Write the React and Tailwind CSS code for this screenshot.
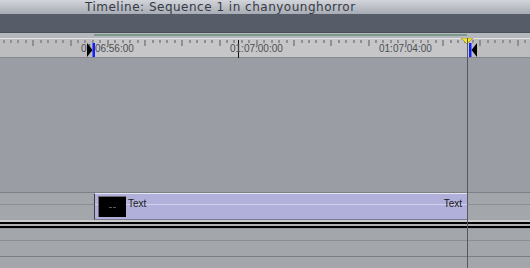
import React from "react";

const ticks = Array.from({ length: 72 }, (_, i) => 2.5 + i * 7.45);

const labels = [
  { text: "01:06:56:00", x: 81 },
  { text: "01:07:00:00", x: 230 },
  { text: "01:07:04:00", x: 379 },
];

const sans = { fontFamily: '"Liberation Sans", Arial, sans-serif' };

function Ruler() {
  return (
    <div className="relative h-[20px] bg-[#c6c6c8] border-t border-[#e2e2e4] border-b border-b-[#86898e]">
      <div className="absolute left-0 top-0 bottom-0 w-[94px] bg-[#bdbdbf]" />
      <div className="absolute left-[472px] right-0 top-0 bottom-0 bg-[#bdbdbf]" />
      {ticks.map((x, i) => (
        <div
          key={i}
          className="absolute top-[1px] w-[2px] bg-[#8f8f92]"
          style={{ left: x, height: i % 5 === 4 ? 6 : 3 }}
        />
      ))}
      <div className="absolute left-[238px] top-[1px] h-[18px] w-[1px] bg-[#111]" />
      {labels.map((l) => (
        <span
          key={l.text}
          className="absolute top-[4px] text-[10px] leading-[12px] text-[#4c4e52]"
          style={{ left: l.x, ...sans }}
        >
          {l.text}
        </span>
      ))}
      {/* in point */}
      <svg className="absolute left-[86px] top-[4px]" width="9" height="14" viewBox="0 0 9 14">
        <path d="M1 0 L6.5 7 L1 14 Z" fill="#000" />
        <rect x="6.5" y="0" width="2.5" height="14" fill="#1020ff" />
      </svg>
      {/* out point */}
      <svg className="absolute left-[469px] top-[4px]" width="9" height="14" viewBox="0 0 9 14">
        <rect x="0" y="0" width="2.5" height="14" fill="#1020ff" />
        <path d="M8 0 L2.5 7 L8 14 Z" fill="#000" />
      </svg>
      {/* playhead */}
      <svg className="absolute left-[461px] top-[-1px]" width="12" height="7" viewBox="0 0 12 7">
        <path d="M0 0 L12 0 L6 6 Z" fill="#f2e62a" stroke="#8a8420" strokeWidth="0.6" />
      </svg>
    </div>
  );
}

function Clip() {
  return (
    <div className="absolute left-[94px] top-0 h-[27px] w-[374px] bg-[#b0b0da] border-l border-l-[#3c3c44] border-t border-t-[#e4e4f2] border-b border-b-[#7a7a90] border-r border-r-[#d8d8e8]">
      <div className="absolute left-0 right-0 top-[10px] h-[1px] bg-[#d0d0ea]" />
      <div className="absolute left-[3px] top-[2px] w-[28px] h-[21px] bg-black border-t border-l border-[#6a6a70] flex items-center justify-center gap-[1px]">
        <div className="w-[3px] h-[1px] bg-[#5a5a5a]" />
        <div className="w-[3px] h-[1px] bg-[#5a5a5a]" />
      </div>
      <span className="absolute left-[33px] top-[4px] text-[10px] leading-[12px] text-[#1a1a20]" style={sans}>
        Text
      </span>
      <span className="absolute right-[5px] top-[4px] text-[10px] leading-[12px] text-[#1a1a20]" style={sans}>
        Text
      </span>
    </div>
  );
}

export default function App() {
  return (
    <div className="relative w-[530px] h-[268px] overflow-hidden bg-[#a3a7ab] flex flex-col">
      <div
        className="h-[14px] bg-gradient-to-b from-[#d3d5db] to-[#a7abb3] pl-[85px] text-[12px] leading-[14px] tracking-[0.5px] text-[#353a46] whitespace-nowrap"
        style={{ fontFamily: '"DejaVu Sans", Verdana, sans-serif' }}
      >
        Timeline: Sequence 1 in chanyounghorror
      </div>
      <div className="h-[19px] bg-[#565d68] border-b border-[#4a5059]" />
      <div className="relative h-[5px] bg-[#b4b7bc]">
        <div className="absolute left-[94px] w-[373px] top-[1px] h-[2px] bg-[#7c9a8c]" />
      </div>
      <Ruler />
      <div className="h-[135px] bg-[#9a9da3] border-b border-[#7d8085]" />
      <div className="relative h-[27px] bg-[#a3a7ab]">
        <div className="absolute left-0 right-0 top-[11px] h-[1px] bg-[#8c8f94]" />
        <Clip />
      </div>
      <div className="h-[2px] bg-[#c9cacc]" />
      <div className="h-[2px] bg-black" />
      <div className="h-[2px] bg-[#aeb0b3]" />
      <div className="h-[2px] bg-black" />
      <div className="h-[13px] bg-[#a3a7ab] border-t border-[#94979b] border-b border-b-[#8a8d92]" />
      <div className="h-[16px] bg-[#a3a7ab] border-b border-[#7a7d82]" />
      <div className="flex-1 bg-[#a3a7ab]" />
      <div className="absolute left-[467px] top-[38px] bottom-0 w-[1px] bg-[#55585c]" />
    </div>
  );
}
